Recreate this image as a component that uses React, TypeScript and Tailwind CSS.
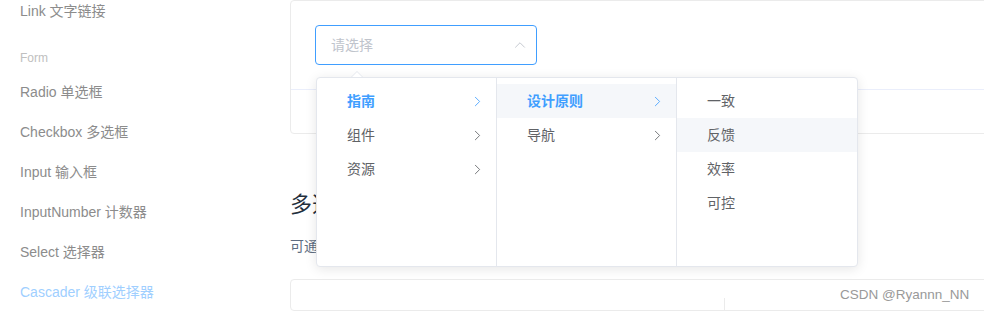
import { ChevronRight, ChevronUp } from 'lucide-react'

const font = { fontFamily: '"Liberation Sans", "Noto Sans CJK SC", sans-serif' }

const navItems = ['Radio 单选框', 'Checkbox 多选框', 'Input 输入框', 'InputNumber 计数器', 'Select 选择器']

type Node = { label: string; active?: boolean; hover?: boolean; leaf?: boolean }

const columns: Node[][] = [
  [{ label: '指南', active: true }, { label: '组件' }, { label: '资源' }],
  [{ label: '设计原则', active: true, hover: true }, { label: '导航' }],
  [
    { label: '一致', leaf: true },
    { label: '反馈', leaf: true, hover: true },
    { label: '效率', leaf: true },
    { label: '可控', leaf: true },
  ],
]

function CascaderPanel() {
  return (
    <div className="absolute left-[316px] top-[77px] z-10">
      {/* popper arrow */}
      <div className="absolute left-[35px] -top-[6px] h-0 w-0 border-x-[6px] border-b-[6px] border-x-transparent border-b-[#e4e7ed]" />
      <div className="absolute left-[36px] -top-[5px] h-0 w-0 border-x-[5px] border-b-[5px] border-x-transparent border-b-white" />
      <div className="flex h-[190px] rounded border border-[#e4e7ed] bg-white shadow-[0_2px_12px_0_rgba(0,0,0,0.1)]">
        {columns.map((col, i) => (
          <div
            key={i}
            className={`w-[180px] py-[6px] ${i < columns.length - 1 ? 'border-r border-[#e4e7ed]' : ''}`}
          >
            {col.map((n) => (
              <div
                key={n.label}
                className={`flex h-[34px] items-center justify-between pl-[30px] pr-[10px] text-sm ${
                  n.hover ? 'bg-[#f5f7fa]' : ''
                } ${n.active ? 'font-bold text-[#409eff]' : 'text-[#606266]'}`}
              >
                <span>{n.label}</span>
                {!n.leaf && (
                  <ChevronRight
                    className={`h-[17px] w-[17px] ${n.active ? 'text-[#409eff]' : 'text-[#606266]'}`}
                    strokeWidth={1.2}
                  />
                )}
              </div>
            ))}
          </div>
        ))}
      </div>
    </div>
  )
}

export default function App() {
  return (
    <div className="relative flex h-[311px] w-[984px] overflow-hidden bg-white" style={font}>
      {/* Sidebar */}
      <div className="w-[290px] shrink-0 pl-5">
        <div className="-mt-[9px] h-10 leading-10 text-sm text-[#8c8c8c]">Link 文字链接</div>
        <div className="flex h-[41px] items-end pb-[5px] text-xs leading-[18px] text-[#c0c0c0]">Form</div>
        {navItems.map((item) => (
          <div key={item} className="h-10 leading-10 text-sm text-[#8c8c8c]">
            {item}
          </div>
        ))}
        <div className="h-10 leading-10 text-sm text-[#a0cfff]">Cascader 级联选择器</div>
      </div>

      {/* Main */}
      <div className="flex w-[720px] shrink-0 flex-col">
        <div className="rounded border border-[#ebebeb]">
          <div className="h-[88px] p-6">
            <div className="flex h-10 w-[222px] items-center justify-between rounded border border-[#409eff] pl-[15px] pr-[7px]">
              <span className="text-sm text-[#c0c4cc]">请选择</span>
              <ChevronUp className="h-[18px] w-[18px] text-[#c0c4cc]" strokeWidth={1.2} />
            </div>
          </div>
          <div className="h-[44px] border-t border-[#eaeefb]" />
        </div>

        <h3 className="mt-[54px] text-[22px] leading-[33px] text-[#1f2f3d]">多选</h3>
        <p className="mt-[14px] text-sm leading-[22px] text-[#5e6d82]">可通过 props.multiple = true 来开启多选模式</p>

        <div className="mt-[22px] flex h-[60px] rounded border border-[#ebebeb]">
          <div className="mt-[18px] w-[434px] border-r border-[#ebebeb]" />
        </div>
      </div>

      <CascaderPanel />

      <div className="absolute left-[840px] top-[285px] text-[13.5px] text-[#999]">CSDN @Ryannn_NN</div>
    </div>
  )
}
